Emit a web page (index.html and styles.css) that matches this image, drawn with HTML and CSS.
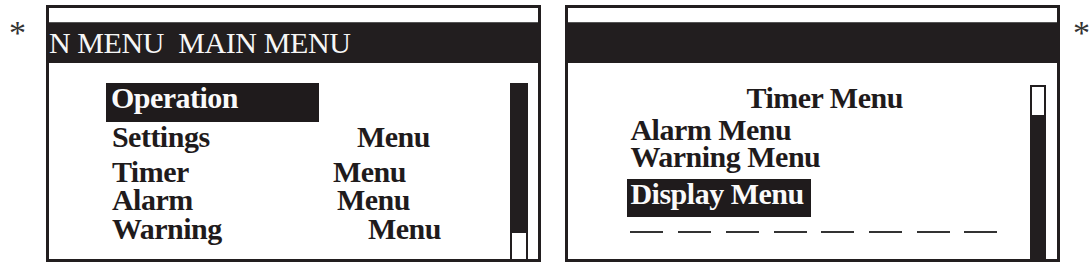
FILE: index.html
```html
<!DOCTYPE html>
<html>
<head>
<meta charset="utf-8">
<link rel="stylesheet" href="styles.css">
</head>
<body>
<div class="page">
  <div class="star star-left">*</div>
  <div class="panel panel-left">
    <div class="strip"></div>
    <div class="bar"><span class="title">N MENU&nbsp;&nbsp;MAIN MENU</span></div>
    <div class="body">
      <div class="list list-left">
        <div class="row row-op"><span class="hl hl-op">Operation</span></div>
        <div class="row row-settings"><span class="label">Settings</span><span class="menu">Menu</span></div>
        <div class="row row-timer"><span class="label">Timer</span><span class="menu">Menu</span></div>
        <div class="row row-alarm"><span class="label">Alarm</span><span class="menu">Menu</span></div>
        <div class="row row-warning"><span class="label">Warning</span><span class="menu">Menu</span></div>
      </div>
      <div class="scroll scroll-left">
        <div class="fill"></div>
        <div class="thumb thumb-bottom"></div>
      </div>
    </div>
  </div>
  <div class="panel panel-right">
    <div class="strip"></div>
    <div class="bar"></div>
    <div class="body">
      <div class="list list-right">
        <div class="row r-timer">Timer Menu</div>
        <div class="row r-alarm">Alarm Menu</div>
        <div class="row r-warning">Warning Menu</div>
        <div class="row r-display"><span class="hl hl-display">Display Menu</span></div>
        <div class="dashes">
          <span class="dash"></span><span class="dash"></span><span class="dash"></span><span class="dash"></span>
          <span class="dash"></span><span class="dash"></span><span class="dash"></span><span class="dash"></span>
        </div>
      </div>
      <div class="scroll scroll-right">
        <div class="thumb thumb-top"></div>
        <div class="fill"></div>
      </div>
    </div>
  </div>
  <div class="star star-right">*</div>
</div>
</body>
</html>
```
FILE: styles.css
```css
html, body {
  margin: 0;
  padding: 0;
  background: #ffffff;
}
body {
  width: 1090px;
  height: 265px;
  overflow: hidden;
  font-family: "Liberation Serif", "Times New Roman", serif;
  color: #1f1b1c;
}
.page {
  display: flex;
  align-items: flex-start;
  padding-top: 5px;
}
.star {
  font-size: 34px;
  line-height: 34px;
  color: #333;
}
.star-left {
  width: 46px;
  box-sizing: border-box;
  padding-left: 9px;
  padding-top: 11px;
}
.star-right {
  padding-left: 13px;
  padding-top: 11px;
}
.panel {
  box-sizing: border-box;
  height: 257px;
  border: 3px solid #221e1f;
  display: flex;
  flex-direction: column;
}
.panel-left {
  width: 497px;
}
.panel-right {
  width: 496px;
  margin-left: 24px;
}
.strip {
  height: 14px;
  background: #fff;
  border-bottom: 1px solid #555;
}
.bar {
  height: 40px;
  background: #221e1f;
  overflow: hidden;
  white-space: nowrap;
}
.title {
  display: block;
  color: #f6f6f6;
  font-size: 30px;
  line-height: 40px;
  letter-spacing: -0.4px;
}
.body {
  flex: 1;
  display: flex;
  min-height: 0;
}
.list {
  flex: 1;
  font-weight: bold;
  font-size: 30px;
  letter-spacing: -0.5px;
  white-space: nowrap;
}
.list-left {
  padding-top: 20px;
  padding-left: 57px;
}
.row {
  display: flex;
}
.hl {
  display: block;
  background: #1f1b1c;
  color: #fafafa;
  box-sizing: border-box;
}
.row-op { line-height: 30px; }
.hl-op {
  width: 213px;
  height: 39px;
  padding-left: 5px;
}
.row-settings { line-height: 30px; margin-bottom: 6px; padding-left: 6px; }
.row-timer { line-height: 28px; padding-left: 6px; }
.row-alarm { line-height: 28px; padding-left: 6px; }
.row-warning { line-height: 30px; padding-left: 6px; }
.label {
  width: 221px;
}
.row-settings .menu { margin-left: 24px; }
.row-timer .menu { margin-left: 0; }
.row-alarm .menu { margin-left: 4px; }
.row-warning .menu { margin-left: 35px; }

.scroll {
  box-sizing: border-box;
  border: 2px solid #221e1f;
  border-bottom: none;
  display: flex;
  flex-direction: column;
}
.scroll-left {
  width: 18px;
  margin-top: 20px;
  margin-right: 10px;
}
.scroll-right {
  width: 16px;
  margin-top: 22px;
  margin-right: 11px;
}
.fill {
  flex: 1;
  background: #221e1f;
}
.thumb {
  background: #fff;
}
.thumb-bottom {
  height: 26px;
  border-top: 2px solid #221e1f;
}
.thumb-top {
  height: 28px;
  border-bottom: 2px solid #221e1f;
}

.list-right {
  padding-top: 20px;
  padding-left: 59px;
}
.r-timer {
  line-height: 30px;
  margin-bottom: 4px;
  padding-left: 119px;
}
.r-alarm {
  line-height: 26px;
  padding-left: 3px;
}
.r-warning {
  line-height: 28px;
  margin-bottom: 8px;
  padding-left: 3px;
}
.r-display {
  line-height: 30px;
}
.hl-display {
  width: 184px;
  height: 38px;
  padding-left: 3px;
}
.dashes {
  display: flex;
  gap: 14.7px;
  margin-top: 14px;
  padding-left: 3px;
}
.dash {
  width: 33px;
  height: 2px;
  background: #333;
}
```
